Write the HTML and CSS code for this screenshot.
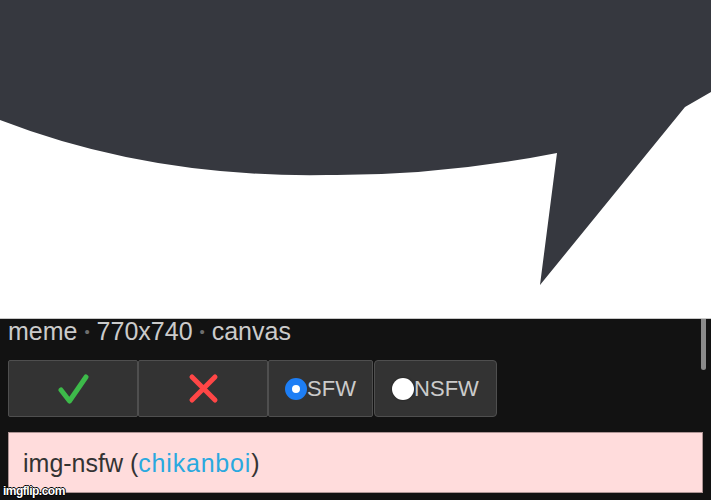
FILE: index.html
```html
<!DOCTYPE html>
<html lang="en">
<head>
    <meta charset="UTF-8">
    <meta name="viewport" content="width=device-width, initial-scale=1.0">
    <title>img-nsfw</title>
    <link rel="stylesheet" href="styles.css">
</head>
<body>

<!-- Meme picture -->
<div class="picture">
    <svg width="711" height="318" viewBox="0 0 711 318">
        <path class="bubble" d="M0 0 H711 V92 L685 107 L540 285 L557 153 Q440 176 327 175 Q150 178 0 120 Z"/>
    </svg>
</div>

<!-- Info panel -->
<div class="panel">
    <div class="meta">meme <span class="dot">•</span> 770x740 <span class="dot">•</span> canvas</div>

    <div class="buttons">
        <button class="btn btn-wide" title="Approve">
            <svg width="31" height="31" viewBox="0 0 31 31">
                <path d="M3 17 L11.5 28 L28 4" fill="none" stroke="#3dba4a" stroke-width="5" stroke-linecap="round" stroke-linejoin="round"/>
            </svg>
        </button>
        <button class="btn btn-wide" title="Disapprove">
            <svg width="31" height="31" viewBox="0 0 31 31">
                <path d="M4 4 L27 27 M27 4 L4 27" fill="none" stroke="#ff4646" stroke-width="5" stroke-linecap="round"/>
            </svg>
        </button>
        <button class="btn btn-sfw"><span class="radio checked"></span>SFW</button>
        <button class="btn btn-nsfw"><span class="radio"></span>NSFW</button>
    </div>

    <div class="flag">img-nsfw (<a href="#">chikanboi</a>)</div>

    <div class="scrollbar"></div>
</div>

<div class="watermark">imgflip.com</div>

</body>
</html>
```

FILE: styles.css
```css
body {
    margin: 0;
    font-family: "Liberation Sans", Arial, sans-serif;
    background: #121212;
    width: 711px;
    height: 500px;
    overflow: hidden;
    position: relative;
}
.picture {
    height: 318px;
    background: #fff;
    border-bottom: 1px solid #c8c8c8;
}
.picture svg {
    display: block;
}
.bubble {
    fill: #36383f;
}
.panel {
    position: relative;
    height: 181px;
    padding: 0 8px;
    box-sizing: border-box;
}
.meta {
    font-size: 25px;
    line-height: 24px;
    color: #cbcbcb;
    margin-bottom: 16px;
}
.dot {
    color: #6e6e6e;
    font-size: 15px;
    vertical-align: 3px;
}
.buttons {
    display: flex;
    height: 57px;
}
.btn {
    display: flex;
    align-items: center;
    justify-content: center;
    background: #333;
    border: 1px solid #4f4f4f;
    border-radius: 2px;
    color: #cbcbcb;
    font-family: "Liberation Sans", Arial, sans-serif;
    font-size: 22px;
    padding: 0;
    margin: 0;
}
.btn-wide { width: 130px; }
.btn-sfw { width: 105px; }
.btn-nsfw { width: 123px; margin-left: 1px; border-radius: 4px; }
.radio {
    width: 22px;
    height: 22px;
    border-radius: 50%;
    background: #fff;
    box-sizing: border-box;
    box-shadow: 0 0 2px rgba(0, 0, 0, 0.6);
}
.radio.checked {
    background: #fff;
    border: 7px solid #1d7ef5;
    box-shadow: none;
}
.flag {
    margin-top: 15px;
    height: 61px;
    box-sizing: border-box;
    background: #ffdcdc;
    border: 1px solid #ad9494;
    padding: 1px 0 0 14px;
    font-size: 25px;
    line-height: 59px;
    color: #333;
}
.flag a {
    color: #2aa9df;
    text-decoration: none;
    letter-spacing: 0.8px;
}
.scrollbar {
    position: absolute;
    top: 0;
    right: 5px;
    width: 5px;
    height: 51px;
    background: #8a8a8a;
    border-radius: 0 0 3px 3px;
}
.watermark {
    position: absolute;
    left: 3px;
    bottom: 2px;
    font-size: 12px;
    font-weight: bold;
    letter-spacing: -0.5px;
    color: #fff;
    text-shadow: -1px 0 #000, 1px 0 #000, 0 -1px #000, 0 1px #000;
}
```
